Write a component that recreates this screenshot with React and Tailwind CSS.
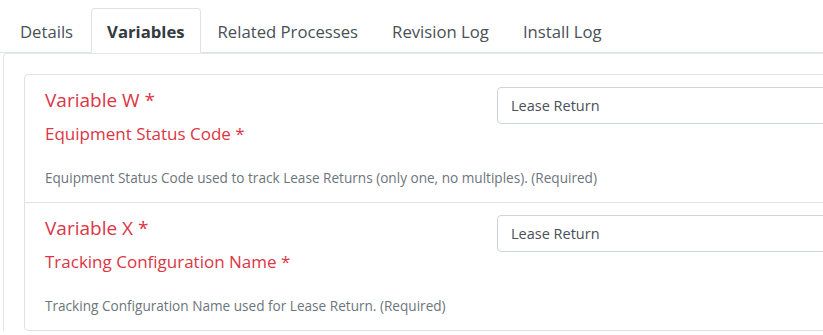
import React from "react";

const tabs = ["Details", "Variables", "Related Processes", "Revision Log", "Install Log"];

const rows = [
  {
    title: "Variable W *",
    label: "Equipment Status Code *",
    help: "Equipment Status Code used to track Lease Returns (only one, no multiples). (Required)",
    value: "Lease Return",
  },
  {
    title: "Variable X *",
    label: "Tracking Configuration Name *",
    help: "Tracking Configuration Name used for Lease Return. (Required)",
    value: "Lease Return",
  },
];

export default function App() {
  return (
    <div className="w-[823px] h-[335px] overflow-hidden bg-white font-['Open_Sans',sans-serif]">
      {/* Tabs */}
      <div className="flex pl-[3px] pt-[8px] border-b border-[#dee2e6]">
        {tabs.map((t) =>
          t === "Variables" ? (
            <div
              key={t}
              className="-mb-px ml-[1px] h-[45px] px-[15px] pt-[3px] flex items-center border border-[#dee2e6] border-b-white rounded-t-[4px] bg-white text-[16.7px] font-bold text-[#343a40]"
            >
              {t}
            </div>
          ) : (
            <div
              key={t}
              className="h-[44px] px-[17px] pt-[3px] flex items-center text-[16.7px] text-[#495057]"
            >
              {t}
            </div>
          )
        )}
      </div>

      {/* Panel */}
      <div className="ml-[3px] border-l border-t border-[#e5e7eb] rounded-tl-[4px] pt-[20px] pl-[20px]">
        <div className="w-[1000px] border border-[#dee2e6] rounded-[4px]">
          {rows.map((r, i) => (
            <div
              key={r.title}
              className={`flex px-[20px] pt-[11px] pb-[14px] ${i > 0 ? "border-t border-[#dee2e6]" : ""}`}
            >
              <div className="w-[452px] shrink-0">
                <div className="text-[19px] leading-[28px] text-[#dc3545]">{r.title}</div>
                <div className="mt-[8px] text-[17px] leading-[24px] text-[#dc3545]">{r.label}</div>
                <div className="mt-[22px] whitespace-nowrap text-[13.6px] leading-[20px] text-[#6c757d]">
                  {r.help}
                </div>
              </div>
              <div className="flex-1 mt-[1px]">
                <div className="h-[37px] border border-[#ced4da] rounded-[4px] px-[13px] flex items-center text-[14.5px] text-[#495057]">
                  {r.value}
                </div>
              </div>
            </div>
          ))}
        </div>
      </div>
    </div>
  );
}
